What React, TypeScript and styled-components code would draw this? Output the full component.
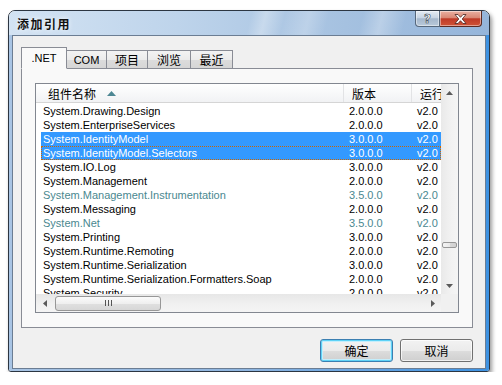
import React from 'react';
import styled, { createGlobalStyle } from 'styled-components';

const GlobalStyle = createGlobalStyle`
  html, body {
    margin: 0;
    padding: 0;
    background: #fff;
  }
  body {
    font-family: "Liberation Sans", "Noto Sans CJK SC", sans-serif;
    font-size: 11px;
    color: #000;
  }
`;

const CJK = `"Noto Sans CJK SC", "Liberation Sans", sans-serif`;

const Page = styled.div`
  padding: 10px 0 0 8px;
`;

const Window = styled.div`
  width: 482px;
  height: 362px;
  box-sizing: border-box;
  border: 1px solid #2c3642;
  border-radius: 7px 7px 3px 3px;
  overflow: hidden;
  display: flex;
  flex-direction: column;
  box-shadow: 2px 3px 4px rgba(0, 0, 0, 0.4);
`;

const TitleBar = styled.div`
  height: 24px;
  flex: none;
  display: flex;
  justify-content: space-between;
  background:
    linear-gradient(104deg, transparent 0 50%, rgba(255, 255, 255, 0.3) 53%, transparent 57%,
      rgba(255, 255, 255, 0.22) 62%, transparent 66%, transparent 73%,
      rgba(255, 255, 255, 0.28) 77%, transparent 82%),
    linear-gradient(90deg, #d3e3f3 0%, #bed4eb 35%, #a5c1e0 70%, #95b5da 100%);
`;

const Title = styled.div`
  align-self: center;
  padding-left: 8px;
  font-family: ${CJK};
  font-weight: 700;
  font-size: 12px;
  letter-spacing: 1.5px;
  color: #111;
  text-shadow: 0 0 5px rgba(255, 255, 255, 0.95);
`;

const Caption = styled.div`
  display: flex;
  align-self: flex-start;
  margin-right: 7px;
`;

const CapButton = styled.div<{ $close?: boolean }>`
  width: ${p => (p.$close ? 42 : 25)}px;
  height: 16px;
  box-sizing: border-box;
  border: 1px solid ${p => (p.$close ? '#5b2a22' : '#56677b')};
  border-top: none;
  border-left: ${p => (p.$close ? 'none' : '1px solid #56677b')};
  border-radius: ${p => (p.$close ? '0 0 4px 0' : '0 0 0 4px')};
  display: flex;
  align-items: center;
  justify-content: center;
  background: ${p =>
    p.$close
      ? 'linear-gradient(180deg, #eab0a2 0%, #d98774 45%, #bf3a27 52%, #cf5336 100%)'
      : 'linear-gradient(180deg, #e4ebf3 0%, #c7d4e3 45%, #a5b7cc 52%, #b9c9da 100%)'};
  box-shadow: inset 0 0 0 1px rgba(255, 255, 255, 0.45);
`;

const HelpGlyph = styled.span`
  font-family: "DejaVu Sans", sans-serif;
  font-weight: 700;
  font-size: 12px;
  line-height: 12px;
  color: #fff;
  -webkit-text-stroke: 0.6px #3a4452;
`;

const Frame = styled.div`
  flex: 1;
  display: flex;
  padding: 0 3px 2px 3px;
  background: linear-gradient(90deg, #a8c4e4 0%, #8db4df 50%, #3d92e2 100%);
`;

const Client = styled.div`
  flex: 1;
  display: flex;
  flex-direction: column;
  border: 1px solid #6b7d93;
  background: #f0f0f0;
  padding: 11px 12px 6px 8px;
`;

const TabStrip = styled.div`
  display: flex;
  align-items: flex-end;
  height: 22px;
  margin-bottom: -1px;
`;

const Tab = styled.div<{ $active?: boolean; $w: number; $cjk?: boolean }>`
  width: ${p => p.$w}px;
  height: ${p => (p.$active ? 22 : 19)}px;
  box-sizing: border-box;
  margin-left: -1px;
  &:first-child { margin-left: 0; }
  border: 1px solid #898c95;
  border-bottom-color: ${p => (p.$active ? '#f9f9f9' : '#898c95')};
  background: ${p => (p.$active ? '#f9f9f9' : 'linear-gradient(180deg, #f3f3f3 0%, #ebebeb 50%, #dcdcdc 51%, #d6d6d6 100%)')};
  position: ${p => (p.$active ? 'relative' : 'static')};
  z-index: ${p => (p.$active ? 1 : 0)};
  display: flex;
  align-items: center;
  justify-content: center;
  font-family: ${p => (p.$cjk ? CJK : '"Liberation Sans", sans-serif')};
  font-size: ${p => (p.$cjk ? 12 : 11)}px;
  padding-bottom: ${p => (p.$active ? 1 : 0)}px;
`;

const Panel = styled.div`
  height: 260px;
  box-sizing: border-box;
  border: 1px solid #898c95;
  background: #f9f9f9;
  padding: 14px 13px 14px 13px;
  display: flex;
`;

const ListView = styled.div`
  flex: 1;
  border: 1px solid #828790;
  background: #fff;
  display: grid;
  grid-template-columns: 1fr 17px;
  grid-template-rows: 1fr 18px;
  overflow: hidden;
`;

const ListBody = styled.div`
  overflow: hidden;
  display: flex;
  flex-direction: column;
  min-width: 0;
`;

const Header = styled.div`
  height: 19px;
  flex: none;
  box-sizing: border-box;
  display: grid;
  grid-template-columns: 307px 68px 1fr;
  border-bottom: 1px solid #d5d5d5;
  background: linear-gradient(180deg, #ffffff 0%, #f7f8f9 55%, #f1f2f4 100%);
  font-family: ${CJK};
  font-size: 12px;
`;

const HeadCell = styled.div<{ $pad: number; $divider?: boolean }>`
  display: flex;
  align-items: center;
  padding-left: ${p => p.$pad}px;
  border-left: ${p => (p.$divider ? '1px solid #e2e3e5' : 'none')};
  white-space: nowrap;
  overflow: hidden;
`;

const SortArrow = styled.svg`
  margin-left: 11px;
  margin-top: 1px;
`;

const Rows = styled.div`
  padding: 1px 0 0 5px;
`;

const Row = styled.div<{ $selected?: boolean; $focus?: boolean; $dim?: boolean }>`
  height: 14px;
  line-height: 14px;
  display: grid;
  grid-template-columns: 302px 68px 1fr;
  white-space: nowrap;
  background: ${p => (p.$selected ? '#3399ff' : 'transparent')};
  color: ${p => (p.$selected ? '#fff' : p.$dim ? '#4a8890' : '#000')};
  outline: ${p => (p.$focus ? '1px dotted #cc6600' : 'none')};
  outline-offset: -1px;
`;

const Cell = styled.div<{ $pad: number }>`
  padding-left: ${p => p.$pad}px;
  overflow: hidden;
`;

const VScroll = styled.div`
  display: flex;
  flex-direction: column;
  background: linear-gradient(90deg, #e9e9e9 0%, #f2f2f2 60%, #f5f5f5 100%);
`;

const HScroll = styled.div`
  display: flex;
  align-items: center;
  background: linear-gradient(180deg, #e7e7e7 0%, #f1f1f1 60%, #f4f4f4 100%);
  min-width: 0;
`;

const Corner = styled.div`
  background: #f0f0f0;
`;

const ArrowBox = styled.div`
  flex: none;
  width: 17px;
  height: 17px;
  display: flex;
  align-items: center;
  justify-content: center;
`;

const VTrack = styled.div`
  flex: 1;
  display: flex;
  justify-content: center;
`;

const VThumb = styled.div<{ $offset: number }>`
  width: 15px;
  height: 6px;
  margin-top: ${p => p.$offset}px;
  box-sizing: border-box;
  border: 1px solid #979797;
  border-radius: 2px;
  background: linear-gradient(90deg, #f4f4f4 0%, #e9e9e9 50%, #d9d9d9 51%, #d0d0d0 100%);
`;

const HTrack = styled.div`
  flex: 1;
  height: 100%;
  display: flex;
  align-items: center;
`;

const HThumb = styled.div<{ $offset: number; $w: number }>`
  width: ${p => p.$w}px;
  height: 15px;
  margin-left: ${p => p.$offset}px;
  box-sizing: border-box;
  border: 1px solid #979797;
  border-radius: 3px;
  background: linear-gradient(180deg, #fbfbfb 0%, #efefef 50%, #e0e0e0 51%, #d7d7d7 100%);
  display: flex;
  align-items: center;
  justify-content: center;
`;

const ButtonRow = styled.div`
  display: flex;
  justify-content: flex-end;
  gap: 7px;
  margin-top: 11px;
`;

const Button = styled.button<{ $default?: boolean }>`
  width: 73px;
  height: 23px;
  box-sizing: border-box;
  border: 1px solid ${p => (p.$default ? '#3c7fb1' : '#707070')};
  border-radius: 3px;
  padding: 0;
  font-family: ${CJK};
  font-size: 12px;
  color: #000;
  background: linear-gradient(180deg, #f2f2f2 0%, #ebebeb 50%, #dddddd 51%, #cfcfcf 100%);
  box-shadow: ${p =>
    p.$default
      ? 'inset 0 0 0 1px #5fd2f6, inset 0 0 0 2px #c4eefc'
      : 'inset 0 0 0 1px rgba(255,255,255,0.7)'};
`;

type Ref = { name: string; ver: string; dim?: boolean; selected?: boolean; focus?: boolean };

const refs: Ref[] = [
  { name: 'System.Drawing.Design', ver: '2.0.0.0' },
  { name: 'System.EnterpriseServices', ver: '2.0.0.0' },
  { name: 'System.IdentityModel', ver: '3.0.0.0', selected: true },
  { name: 'System.IdentityModel.Selectors', ver: '3.0.0.0', selected: true, focus: true },
  { name: 'System.IO.Log', ver: '3.0.0.0' },
  { name: 'System.Management', ver: '2.0.0.0' },
  { name: 'System.Management.Instrumentation', ver: '3.5.0.0', dim: true },
  { name: 'System.Messaging', ver: '2.0.0.0' },
  { name: 'System.Net', ver: '3.5.0.0', dim: true },
  { name: 'System.Printing', ver: '3.0.0.0' },
  { name: 'System.Runtime.Remoting', ver: '2.0.0.0' },
  { name: 'System.Runtime.Serialization', ver: '3.0.0.0' },
  { name: 'System.Runtime.Serialization.Formatters.Soap', ver: '2.0.0.0' },
  { name: 'System.Security', ver: '2.0.0.0' },
];

const tabs = [
  { label: '.NET', w: 46, active: true },
  { label: 'COM', w: 41 },
  { label: '项目', w: 42, cjk: true },
  { label: '浏览', w: 44, cjk: true },
  { label: '最近', w: 43, cjk: true },
];

const Arrow = ({ dir }: { dir: 'up' | 'down' | 'left' | 'right' }) => {
  const pts = {
    up: '0,4 3.5,0 7,4',
    down: '0,0 7,0 3.5,4',
    left: '4,0 4,7 0,3.5',
    right: '0,0 4,3.5 0,7',
  }[dir];
  const vertical = dir === 'up' || dir === 'down';
  return (
    <svg width={vertical ? 7 : 4} height={vertical ? 4 : 7}>
      <polygon points={pts} fill="#5a5a5a" />
    </svg>
  );
};

export default function App() {
  return (
    <>
      <GlobalStyle />
      <Page>
        <Window>
          <TitleBar>
            <Title>添加引用</Title>
            <Caption>
              <CapButton>
                <HelpGlyph>?</HelpGlyph>
              </CapButton>
              <CapButton $close>
                <svg width="13" height="10" viewBox="0 0 13 10">
                  <path
                    d="M1 0.5h3l2.5 2.8L9 0.5h3L8.2 5 12 9.5H9L6.5 6.7 4 9.5H1L4.8 5z"
                    fill="#fff"
                    stroke="#4a2520"
                    strokeWidth="0.8"
                  />
                </svg>
              </CapButton>
            </Caption>
          </TitleBar>
          <Frame>
            <Client>
              <TabStrip>
                {tabs.map(t => (
                  <Tab key={t.label} $w={t.w} $active={t.active} $cjk={t.cjk}>
                    {t.label}
                  </Tab>
                ))}
              </TabStrip>
              <Panel>
                <ListView>
                  <ListBody>
                    <Header>
                      <HeadCell $pad={12}>
                        组件名称
                        <SortArrow width="9" height="5">
                          <polygon points="0,5 4.5,0 9,5" fill="#4d8793" />
                        </SortArrow>
                      </HeadCell>
                      <HeadCell $pad={8} $divider>版本</HeadCell>
                      <HeadCell $pad={8} $divider>运行</HeadCell>
                    </Header>
                    <Rows>
                      {refs.map(r => (
                        <Row key={r.name} $selected={r.selected} $focus={r.focus} $dim={r.dim}>
                          <Cell $pad={2}>{r.name}</Cell>
                          <Cell $pad={6}>{r.ver}</Cell>
                          <Cell $pad={6}>v2.0</Cell>
                        </Row>
                      ))}
                    </Rows>
                  </ListBody>
                  <VScroll>
                    <ArrowBox>
                      <Arrow dir="up" />
                    </ArrowBox>
                    <VTrack>
                      <VThumb $offset={141} />
                    </VTrack>
                    <ArrowBox>
                      <Arrow dir="down" />
                    </ArrowBox>
                  </VScroll>
                  <HScroll>
                    <ArrowBox>
                      <Arrow dir="left" />
                    </ArrowBox>
                    <HTrack>
                      <HThumb $offset={2} $w={106}>
                        <svg width="7" height="6">
                          <rect x="0" y="0" width="1" height="6" fill="#555" />
                          <rect x="3" y="0" width="1" height="6" fill="#555" />
                          <rect x="6" y="0" width="1" height="6" fill="#555" />
                        </svg>
                      </HThumb>
                    </HTrack>
                    <ArrowBox>
                      <Arrow dir="right" />
                    </ArrowBox>
                  </HScroll>
                  <Corner />
                </ListView>
              </Panel>
              <ButtonRow>
                <Button $default>确定</Button>
                <Button>取消</Button>
              </ButtonRow>
            </Client>
          </Frame>
        </Window>
      </Page>
    </>
  );
}
